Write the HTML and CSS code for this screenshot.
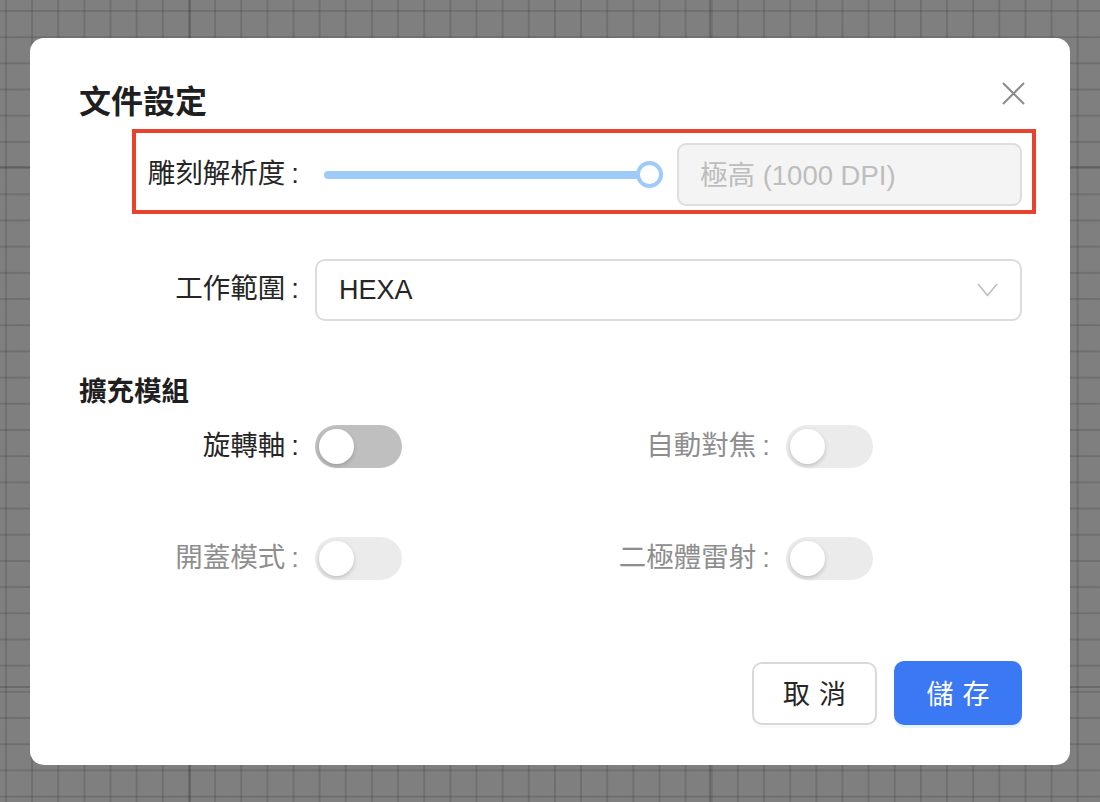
FILE: index.html
```html
<!DOCTYPE html>
<html lang="zh-Hant">
<head>
<meta charset="utf-8">
<title>文件設定</title>
<link rel="stylesheet" href="styles.css">
</head>
<body>
<div class="modal">
  <div class="header">
    <h2 class="title">文件設定</h2>
    <button class="close" aria-label="close">
      <svg width="23" height="23" viewBox="0 0 23 23"><path d="M1 1 L22 22 M22 1 L1 22" stroke="#8c8c8c" stroke-width="2" fill="none"/></svg>
    </button>
  </div>

  <div class="form">
    <div class="highlight">
      <div class="row">
        <label class="label">雕刻解析度</label>
        <div class="control slider-control">
          <div class="slider">
            <div class="rail"></div>
            <div class="handle"></div>
          </div>
          <div class="input disabled">極高 (1000 DPI)</div>
        </div>
      </div>
    </div>

    <div class="row row-select">
      <label class="label">工作範圍</label>
      <div class="select">
        <span class="select-value">HEXA</span>
        <svg class="chevron" width="21" height="14" viewBox="0 0 21 14"><path d="M1 1 L10.5 12.5 L20 1" stroke="#bdbdbd" stroke-width="1.6" fill="none"/></svg>
      </div>
    </div>
  </div>

  <h3 class="section">擴充模組</h3>

  <div class="switch-grid">
    <label class="label">旋轉軸</label>
    <div class="switch-cell"><span class="switch"><span class="knob"></span></span></div>
    <label class="label muted">自動對焦</label>
    <div class="switch-cell"><span class="switch disabled"><span class="knob"></span></span></div>
    <label class="label muted">開蓋模式</label>
    <div class="switch-cell"><span class="switch disabled"><span class="knob"></span></span></div>
    <label class="label muted">二極體雷射</label>
    <div class="switch-cell"><span class="switch disabled"><span class="knob"></span></span></div>
  </div>

  <div class="footer">
    <button class="btn"><span class="two">取消</span></button>
    <button class="btn primary"><span class="two">儲存</span></button>
  </div>
</div>
</body>
</html>
```

FILE: styles.css
```css
* { box-sizing: border-box; }

html, body { height: 100%; }

body {
  margin: 0;
  padding: 38px 30px;
  font-family: "Liberation Sans", "Noto Sans CJK TC", sans-serif;
  color: #262626;
  background-color: #7f7f7f;
  background-image:
    linear-gradient(to right, rgba(40,40,40,0.18) 2px, transparent 2px),
    linear-gradient(to bottom, rgba(40,40,40,0.18) 2px, transparent 2px),
    linear-gradient(to right, rgba(30,30,30,0.22) 2px, transparent 2px),
    linear-gradient(to bottom, rgba(30,30,30,0.22) 2px, transparent 2px);
  background-size: 26.15px 26.2px, 26.15px 26.2px, 520px 520px, 520px 520px;
  background-position: 5px 10px, 5px 10px, 189px 166px, 189px 166px;
}

.modal {
  width: 1040px;
  background: #ffffff;
  border-radius: 14px;
  padding: 44px 48px 40px 49px;
}

.header {
  display: flex;
  justify-content: space-between;
  align-items: flex-start;
}

.title {
  margin: 0;
  font-size: 32px;
  line-height: 41px;
  font-weight: 700;
  color: #1f1f1f;
}

.close {
  border: 0;
  background: none;
  padding: 0;
  margin: 0 -3px 0 0;
  width: 23px;
  height: 23px;
  display: block;
}
.close svg { display: block; }

.form {
  margin-left: 67px;
}

.highlight {
  margin: 6px -14px 0;
  border: 4px solid #e8442d;
  padding: 10px 10px 4px;
}

.row {
  display: grid;
  grid-template-columns: 169px 1fr;
  align-items: center;
}

.label {
  text-align: right;
  font-size: 27.5px;
  line-height: 36px;
  color: #262626;
  white-space: nowrap;
  position: relative;
  top: -1px;
}
.label::after {
  content: ":";
  margin-left: 6px;
  margin-right: 16px;
}
.label.muted { color: #8e8e8e; }

.slider-control {
  display: flex;
  align-items: center;
}

.slider {
  flex: 1;
  position: relative;
  height: 27px;
  margin: 0 14px 0 9px;
  display: flex;
  align-items: center;
}

.rail {
  width: 100%;
  height: 8px;
  border-radius: 4px;
  background: #9ecbf9;
}

.handle {
  position: absolute;
  right: 0;
  top: 0;
  width: 27px;
  height: 27px;
  border-radius: 50%;
  background: #ffffff;
  border: 4px solid #9ecbf9;
}

.input {
  width: 345px;
  height: 63px;
  border: 2px solid #dedede;
  border-radius: 9px;
  background: #f4f4f4;
  padding: 0 0 3px 21px;
  display: flex;
  align-items: center;
  font-size: 27.5px;
  color: #bdbdbd;
}

.row-select { margin-top: 45px; }

.select {
  height: 62px;
  border: 2px solid #dcdcdc;
  border-radius: 10px;
  display: flex;
  align-items: center;
  justify-content: space-between;
  padding: 0 22px 0 22px;
}
.select-value {
  font-size: 27px;
  color: #262626;
}
.chevron { display: block; }

.section {
  margin: 53px 0 0;
  font-size: 27.5px;
  line-height: 36px;
  font-weight: 700;
  color: #1f1f1f;
}

.switch-grid {
  margin: 15px 0 0 67px;
  display: grid;
  grid-template-columns: 169px 302px 169px 1fr;
  row-gap: 69px;
  align-items: center;
}

.switch-cell { display: flex; }

.switch {
  display: block;
  position: relative;
  width: 87px;
  height: 43px;
  border-radius: 22px;
  background: #bfbfbf;
}
.switch.disabled { background: #ebebeb; }

.knob {
  position: absolute;
  left: 4px;
  top: 4px;
  width: 35px;
  height: 35px;
  border-radius: 50%;
  background: #ffffff;
  box-shadow: 0 2px 4px rgba(0, 35, 11, 0.2);
}

.footer {
  margin-top: 82px;
  display: flex;
  justify-content: flex-end;
  gap: 17px;
}

.btn {
  width: 125px;
  height: 63px;
  padding: 0 0 2px;
  border: 2px solid #d9d9d9;
  border-radius: 10px;
  background: #ffffff;
  color: #262626;
  font-family: "Liberation Sans", "Noto Sans CJK TC", sans-serif;
  font-size: 27px;
  box-shadow: 0 3px 0 rgba(0, 0, 0, 0.02);
  display: flex;
  align-items: center;
  justify-content: center;
}
.btn .two {
  letter-spacing: 0.34em;
  margin-right: -0.34em;
}
.btn.primary {
  width: 128px;
  height: 64px;
  margin-top: -1px;
  background: #3b78f3;
  border-color: #3b78f3;
  color: #ffffff;
  box-shadow: 0 3px 0 rgba(5, 145, 255, 0.1);
}
```
